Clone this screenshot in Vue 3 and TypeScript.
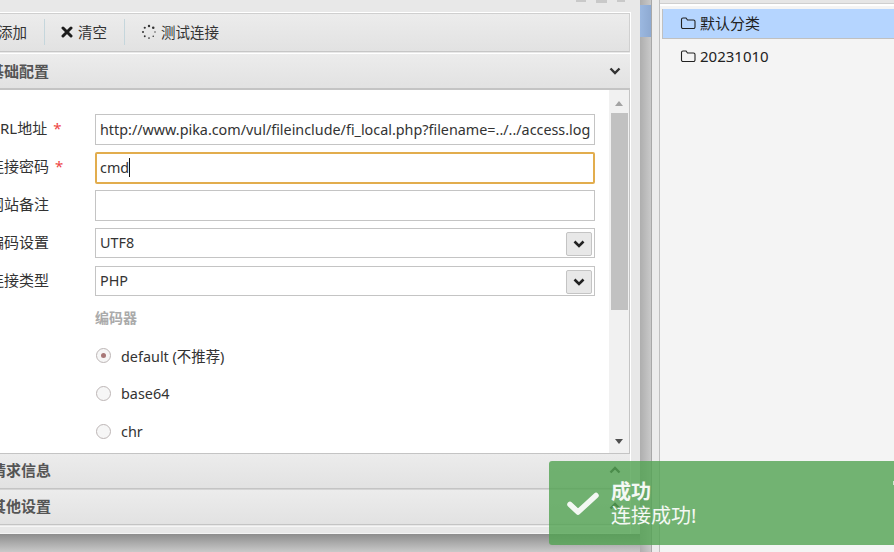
<script setup lang="ts">
const fields = [
  { label: 'URL地址', value: 'http://www.pika.com/vul/fileinclude/fi_local.php?filename=../../access.log', req: true, kind: 'text' },
  { label: '连接密码', value: 'cmd', req: true, kind: 'focus' },
  { label: '网站备注', value: '', req: false, kind: 'text' },
  { label: '编码设置', value: 'UTF8', req: false, kind: 'select' },
  { label: '连接类型', value: 'PHP', req: false, kind: 'select' },
]
const encoders = [
  { name: 'default (不推荐)', on: true },
  { name: 'base64', on: false },
  { name: 'chr', on: false },
]
const dots = [0, 45, 90, 135, 180, 225, 270, 315].map((deg, i) => ({
  x: 8 + 6 * Math.cos((deg * Math.PI) / 180),
  y: 8 + 6 * Math.sin((deg * Math.PI) / 180),
  r: 0.7 + i * 0.08,
}))
</script>

<template>
  <div class="page">
    <div class="left">
      <div class="window">
        <div class="title">
          <i class="ctl"></i><i class="ctl wide"></i><i class="ctl small"></i>
        </div>
        <div class="box">
          <div class="toolbar">
            <span class="tool first">添加</span>
            <span class="sep"></span>
            <span class="tool">
              <svg class="ico-x" width="12" height="12" viewBox="0 0 12 12"><path d="M2 2 10 10M10 2 2 10" stroke="#1c1c1c" stroke-width="3" stroke-linecap="round" /></svg>
              清空
            </span>
            <span class="sep"></span>
            <span class="tool">
              <svg class="ico-s" width="16" height="16" viewBox="0 0 16 16"><circle v-for="(d, i) in dots" :key="i" :cx="d.x" :cy="d.y" :r="d.r" fill="#333" /></svg>
              测试连接
            </span>
          </div>
          <div class="head">
            <span>基础配置</span>
            <svg class="chev" width="12" height="8" viewBox="0 0 12 8"><path d="M1.5 1.5 6 6l4.500-4.500" fill="none" stroke="#333" stroke-width="2.400" /></svg>
          </div>
          <div class="body">
            <div class="form">
              <div v-for="f in fields" :key="f.label" class="row" :class="f.kind">
                <label class="lbl">{{ f.label }}<b v-if="f.req" class="req">*</b></label>
                <div class="field" :class="{ focus: f.kind === 'focus' }">
                  <span class="val">{{ f.value }}</span>
                  <span v-if="f.kind === 'focus'" class="caret"></span>
                  <span v-if="f.kind === 'select'" class="drop">
                    <svg width="12" height="8" viewBox="0 0 12 8"><path d="M1.500 1.500 6 6l4.500-4.500" fill="none" stroke="#222" stroke-width="2.600" /></svg>
                  </span>
                </div>
              </div>
              <div class="sub">编码器</div>
              <div v-for="e in encoders" :key="e.name" class="radio">
                <span class="dot" :class="{ on: e.on }"></span>
                <span>{{ e.name }}</span>
              </div>
            </div>
            <div class="scroll">
              <i class="arrow up"></i>
              <div class="thumb"></div>
              <i class="arrow down"></i>
            </div>
          </div>
          <div class="head low">
            <span>请求信息</span>
            <svg class="chev" width="12" height="8" viewBox="0 0 12 8"><path d="M1.500 6.500 6 2l4.500 4.500" fill="none" stroke="#333" stroke-width="2.400" /></svg>
          </div>
          <div class="head low second">
            <span>其他设置</span>
            <svg class="chev" width="12" height="8" viewBox="0 0 12 8"><path d="M1.500 6.500 6 2l4.500 4.500" fill="none" stroke="#333" stroke-width="2.400" /></svg>
          </div>
          <div class="foot"></div>
        </div>
      </div>
      <div class="under"></div>
    </div>

    <div class="gutter"><div class="peek"></div></div>
    <div class="strip"></div>

    <div class="side">
      <div class="side-top"></div>
      <ul class="list">
        <li class="cat sel">
          <svg width="16" height="14" viewBox="0 0 16 14"><path d="M1.500 3.500a1.500 1.500 0 0 1 1.500-1.500h3l1.500 2h6a1.500 1.500 0 0 1 1.500 1.500v5.500a1.500 1.500 0 0 1-1.500 1.500h-10.500a1.500 1.500 0 0 1-1.500-1.500z" fill="none" stroke="#222" stroke-width="1.100" /></svg>
          默认分类
        </li>
        <li class="cat">
          <svg width="16" height="14" viewBox="0 0 16 14"><path d="M1.500 3.500a1.500 1.500 0 0 1 1.500-1.500h3l1.500 2h6a1.500 1.500 0 0 1 1.500 1.500v5.500a1.500 1.500 0 0 1-1.500 1.500h-10.500a1.500 1.500 0 0 1-1.500-1.500z" fill="none" stroke="#222" stroke-width="1.100" /></svg>
          20231010
        </li>
      </ul>
    </div>

    <div class="toast">
      <svg class="check" width="34" height="26" viewBox="0 0 34 26"><path d="M4 13.500l8 7.500L30 4.500" fill="none" stroke="#fff" stroke-width="5.500" stroke-linecap="round" stroke-linejoin="round" /></svg>
      <div class="msg">
        <div class="msg-title">成功</div>
        <div class="msg-text">连接成功!</div>
      </div>
      <i class="close"></i>
    </div>
  </div>
</template>

<style>
html, body { margin: 0; overflow: hidden; }
</style>

<style scoped>
.page {
  position: relative;
  display: flex;
  width: 894px;
  height: 552px;
  overflow: hidden;
  background: #e0e0e0;
  color: #333;
  font-family: "Noto Sans", "Noto Sans CJK SC", sans-serif;
  font-size: 14px;
}
.left { width: 640px; flex: none; display: flex; flex-direction: column; overflow: hidden; }
.window {
  width: 665px;
  margin-left: -25px;
  height: 534px;
  flex: none;
  background: #e8e8e8;
  padding-right: 9px;
  box-sizing: border-box;
  display: flex;
  flex-direction: column;
}
.title { height: 12px; flex: none; display: flex; justify-content: flex-end; gap: 10px; align-items: flex-start; padding-right: 6px; }
.ctl { display: block; width: 10px; height: 2px; background: #c9c9c9; }
.ctl.wide { width: 11px; height: 3px; }
.ctl.small { width: 8px; height: 2px; }
.box { border-top: 1px solid #fff; border-right: 1px solid #fff; flex: 1; display: flex; flex-direction: column; min-height: 0; }
.toolbar {
  height: 39px;
  flex: none;
  box-sizing: border-box;
  display: flex;
  align-items: center;
  padding-bottom: 2px;
  border-top: 1px solid #cfcfcf;
  border-bottom: 1px solid #c6c6c6;
  border-right: 1px solid #d0d0d0;
  background: linear-gradient(#ececec, #e2e2e2);
  font-size: 14.5px;
}
.tool { display: flex; align-items: center; }
.tool.first { padding-left: 23px; }
.sep { width: 1px; height: 26px; background: #c5d6dc; margin: 0 16px 0 17px; }
.ico-x { margin-right: 5px; }
.ico-s { margin-right: 4px; }
.head {
  height: 37px;
  flex: none;
  box-sizing: border-box;
  margin-top: 1px;
  display: flex;
  align-items: center;
  justify-content: space-between;
  padding: 0 9px 2px 14px;
  border-top: 1px solid #fff;
  border-bottom: 2px solid #c4c4c4;
  background: linear-gradient(#ececec, #e2e2e2);
  font-size: 15px;
  font-weight: 700;
  color: #555;
}
.head.low { margin-top: 0; height: 36px; border-top: 1px solid #c4c4c4; border-bottom: 1px solid #c4c4c4; padding: 0 9px 4px 16px; }
.head.second { border-top: 1px solid #d4d4d4; }
.chev { margin-top: 2px; }
.foot { margin-top: 1px; border-top: 1px solid #f6f6f6; flex: 1; border-bottom: 1px solid #f4f4f4; }
.body { height: 363px; flex: none; display: flex; background: #fff; border-right: 1px solid #c4c4c4; }
.form { flex: 1; overflow: hidden; padding: 24px 0 0 14px; }
.row { display: flex; align-items: center; height: 31px; margin-bottom: 7px; }
.row.select { height: 30px; margin-bottom: 8px; }
.lbl { width: 106px; flex: none; white-space: nowrap; font-size: 15px; padding-bottom: 4px; }
.req { color: #ee4444; font-weight: 400; margin-left: 6px; }
.field {
  position: relative;
  width: 500px;
  height: 100%;
  box-sizing: border-box;
  border: 1px solid #c4c4c4;
  display: flex;
  align-items: center;
  padding-left: 4px;
  white-space: nowrap;
  overflow: hidden;
  font-size: 14.35px;
  color: #333;
}
.row.select .val { padding-bottom: 2px; }
.field.focus { height: 32px; flex: none; border: 2px solid #e2ad4e; border-radius: 2px; padding-left: 3px; }
.caret { width: 1px; height: 19px; background: #111; }
.drop {
  position: absolute;
  right: 2px;
  top: 3px;
  width: 24px;
  height: 22px;
  border: 1px solid #c4c4c4;
  border-radius: 2px;
  background: #e8e8e8;
  display: flex;
  align-items: center;
  justify-content: center;
}
.sub { margin: 0 0 0 106px; height: 32px; line-height: 28px; font-size: 14px; font-weight: 700; color: #aaa; }
.radio { display: flex; align-items: center; height: 38px; margin-left: 107px; gap: 10px; font-size: 14.4px; }
.dot { width: 13px; height: 13px; border: 1px solid #bdb6b6; border-radius: 50%; background: #f6f6f6; position: relative; flex: none; }
.dot.on::after { content: ""; position: absolute; left: 4px; top: 4px; width: 5px; height: 5px; border-radius: 50%; background: #a87878; }
.scroll { width: 20px; flex: none; background: #f1f1f1; display: flex; flex-direction: column; align-items: center; padding-top: 11px; box-sizing: border-box; }
.thumb { width: 17px; height: 197px; background: #c1c1c1; margin-top: 7px; }
.arrow { display: block; width: 0; height: 0; border-left: 4px solid transparent; border-right: 4px solid transparent; flex: none; }
.arrow.up { border-bottom: 5px solid #a3a3a3; }
.arrow.down { border-top: 5px solid #505050; margin-top: 129px; }
.under { flex: 1; background: linear-gradient(#8d8d8d, #c9c9c9); }
.gutter { width: 11px; flex: none; background: linear-gradient(90deg, #aeaeae, #c9c9c9); border-right: 1px solid #a8a8a8; padding-top: 5px; }
.peek { height: 32px; background: linear-gradient(90deg, #9bb8e0, #8eaad2); }
.strip { width: 7px; flex: none; background: #ececec; border-right: 1px solid #c0c0c0; }
.side { flex: 1; background: #f4f4f4; display: flex; flex-direction: column; }
.side-top { height: 3px; background: #e6e6e6; border-bottom: 1px solid #cfcfcf; box-shadow: 0 2px 0 #fff; flex: none; }
.list { list-style: none; margin: 5px 0 0 2px; padding: 0; font-size: 15px; color: #222; }
.cat { display: flex; align-items: center; height: 30px; box-sizing: border-box; padding: 0 0 1px 18px; gap: 4px; margin-bottom: 2px; }
.cat.sel { background: #b5d5ff; border-left: 1px solid #c0c0c0; border-bottom: 1px solid #c0c0c0; padding: 0 0 2px 17px; }
.toast {
  position: absolute;
  left: 549px;
  top: 461px;
  width: 345px;
  height: 84px;
  background: rgba(81, 163, 81, 0.8);
  border-radius: 3px 0 0 3px;
  display: flex;
  align-items: center;
  color: #fff;
}
.check { margin: 2px 0 0 17px; opacity: 0.92; }
.msg { margin-left: 11px; padding-top: 1px; font-size: 20px; line-height: 24px; color: #f4f8f4; }
.msg-title { font-weight: 700; }
.close { position: absolute; right: 0; top: 20px; width: 1px; height: 4px; background: #cfe6cf; }
</style>
